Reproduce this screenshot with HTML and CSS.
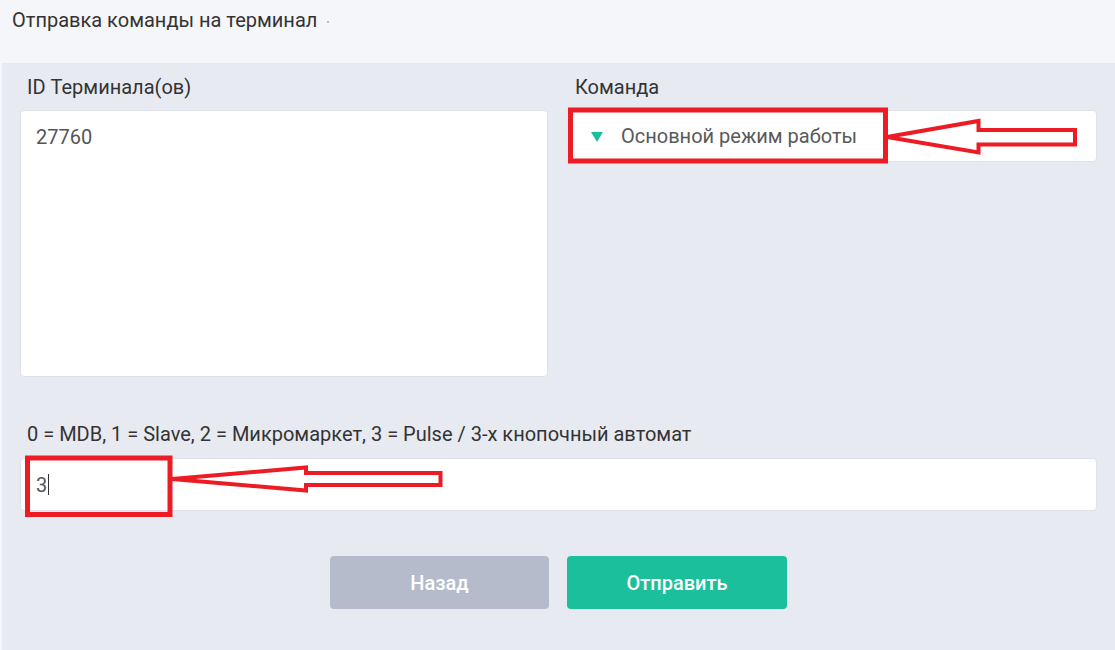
FILE: index.html
```html
<!DOCTYPE html>
<html>
<head>
    <meta charset="utf-8">
    <title>Отправка команды на терминал</title>
    <link rel="stylesheet" href="styles.css">
</head>
<body>
    <div class="header">
        <span class="title">Отправка команды на терминал</span>
        <span class="dot"></span>
    </div>

    <div class="main">
        <div class="row">
            <div class="field">
                <label class="label" for="ids">ID Терминала(ов)</label>
                <div class="box textbox" id="ids">27760</div>
            </div>
            <div class="field">
                <label class="label">Команда</label>
                <div class="box selectbox">
                    <span class="caret"></span>
                    <span class="select-text">Основной режим работы</span>
                </div>
            </div>
        </div>

        <div class="field full">
            <label class="label">0 = MDB, 1 = Slave, 2 = Микромаркет, 3 = Pulse / 3-х кнопочный автомат</label>
            <div class="box inputbox">3<span class="cursor"></span></div>
        </div>

        <div class="buttons">
            <button class="btn btn-back" type="button">Назад</button>
            <button class="btn btn-send" type="button">Отправить</button>
        </div>
    </div>

    <!-- пометки поверх скриншота -->
    <svg class="marks" width="1115" height="650" viewBox="0 0 1115 650">
        <g fill="none" stroke="#ed1c24" stroke-linejoin="miter">
            <rect x="570.5" y="110" width="315" height="51" stroke-width="5"/>
            <polygon points="887,137 978.5,121 978.5,130 1075,130 1075,144.5 978.5,144.5 978.5,152.5" stroke-width="4"/>
            <rect x="27.5" y="458" width="142.5" height="56.5" stroke-width="5"/>
            <polygon points="172,479 306,467.5 306,473 440.5,473 440.5,485 306,485 306,490.5" stroke-width="4"/>
        </g>
    </svg>
</body>
</html>
```

FILE: styles.css
```css
body {
    margin: 0;
    background-color: #f5f6fa;
    font-family: Roboto, "Noto Sans", sans-serif;
    color: #333;
    position: relative;
    width: 1115px;
    height: 650px;
    overflow: hidden;
}

.header {
    height: 63px;
    padding-left: 12px;
    box-sizing: border-box;
    display: flex;
    align-items: flex-start;
    padding-top: 6px;
}

.title {
    font-size: 20px;
    line-height: 28px;
    color: #333;
}

.dot {
    width: 2px;
    height: 2px;
    background-color: #bbb;
    margin: 15px 0 0 10px;
}

.main {
    margin-left: 2px;
    background-color: #e8eaf1;
    padding: 12px 18px 0 18px;
    height: 587px;
    box-sizing: border-box;
}

.row {
    display: grid;
    grid-template-columns: 528px 529px;
    column-gap: 20px;
}

.field {
    display: flex;
    flex-direction: column;
}

.label {
    font-size: 20px;
    line-height: 24px;
    padding-left: 7px;
    margin-bottom: 11px;
    color: #333;
}

.box {
    background-color: #fff;
    border: 1px solid #dfe2ea;
    border-radius: 4px;
    box-sizing: border-box;
    font-size: 20px;
    color: #555;
}

.textbox {
    height: 267px;
    padding: 14px 15px;
    line-height: 24px;
}

.selectbox {
    height: 52px;
    display: flex;
    align-items: center;
    padding-left: 22px;
    color: #595959;
}

.caret {
    width: 0;
    height: 0;
    border-left: 6px solid transparent;
    border-right: 6px solid transparent;
    border-top: 10px solid #1cbf9b;
    margin-right: 18px;
    margin-top: 1px;
}

.full {
    margin-top: 45px;
}

.full .label {
    margin-bottom: 12px;
}

.inputbox {
    height: 53px;
    display: flex;
    align-items: center;
    padding-left: 15px;
}

.cursor {
    display: inline-block;
    width: 1px;
    height: 21px;
    background-color: #333;
    margin-left: 1px;
}

.buttons {
    display: flex;
    justify-content: center;
    gap: 18px;
    margin-top: 45px;
}

.btn {
    width: 219px;
    height: 53px;
    border: none;
    border-radius: 4px;
    font-family: Roboto, "Noto Sans", sans-serif;
    font-size: 20px;
    font-weight: 500;
    color: #fff;
}

.btn-back {
    background-color: #b5bbcb;
}

.btn-send {
    width: 220px;
    background-color: #1cbf9b;
}

.marks {
    position: absolute;
    left: 0;
    top: 0;
    pointer-events: none;
}
```
